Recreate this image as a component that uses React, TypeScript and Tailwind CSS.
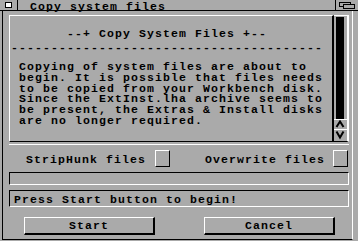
import React from "react";

const lines = [
    "Copying of system files are about to",
    "begin. It is possible that files needs",
    "to be copied from your Workbench disk.",
    "Since the ExtInst.lha archive seems to",
    "be present, the Extras & Install disks",
    "are no longer required.",
];

const font = "font-['Liberation_Mono',monospace] font-bold text-[11.5px] tracking-[1.1px] text-black";

const Checkbox = () => (
    <div className="w-[15px] h-[17px] border-t border-l border-white border-b border-r border-b-black border-r-black" />
);

const Button: React.FC<{ label: string; className?: string }> = ({ label, className }) => (
    <div
        className={`w-[131px] h-[18px] border-t border-l border-white border-b-2 border-r-2 border-b-black border-r-black pt-[1px] text-center leading-[14px] whitespace-pre ${className ?? ""}`}
    >
        {label}
    </div>
);

export default function App() {
    return (
        <div className={`w-[358px] h-[241px] bg-[#aaaaaa] overflow-hidden ${font}`}>
            {/* title bar */}
            <div className="flex h-[11px] border-b border-black">
                <div className="w-[18px] border-r border-black flex items-center justify-center">
                    <div className="w-[7px] h-[6px] border border-black bg-white" />
                </div>
                <div className="flex-1 ml-[12px] leading-[9px] pt-[2px] whitespace-pre">Copy system files</div>
                <div className="w-[23px] border-l border-black">
                    <svg width="22" height="10" viewBox="0 0 22 10">
                        <rect x="3.5" y="2.5" width="11" height="4" fill="#aaaaaa" stroke="black" />
                        <rect x="7.5" y="4.5" width="11" height="4" fill="#aaaaaa" stroke="black" />
                    </svg>
                </div>
            </div>

            {/* window body */}
            <div className="w-[351px] h-[229px] ml-[2px] border-l border-black border-r border-r-white border-b border-b-black">
                <div className="flex flex-col pl-[6px] pt-[4px]">
                    {/* listview */}
                    <div className="flex w-[340px] pb-[2px] border-b border-white">
                        <div className="w-[325px] h-[127px] border-t border-l border-white border-b border-r-2 border-b-black border-r-black pl-[9px] pt-[12px] overflow-hidden">
                            <div className="leading-[11px] whitespace-pre">      --+ Copy System Files +--</div>
                            <div className="leading-[11px] whitespace-pre mt-[3px] ml-[-8px]">{"-".repeat(39)}</div>
                            <div className="leading-[10.8px] whitespace-pre mt-[9px]">
                                {lines.map((l) => (
                                    <div key={l}>{l}</div>
                                ))}
                            </div>
                        </div>
                        <div className="w-[15px] h-[127px] flex flex-col border-t border-white border-r-2 border-b border-b-black">
                            <div className="ml-[2px] mt-[1px] w-[8px] h-[102px] bg-black" />
                            <div className="h-[10px] border-t border-white">
                                <svg width="13" height="9" viewBox="0 0 13 9">
                                    <polyline points="2.5,7 6,1.5 9.5,7" fill="none" stroke="black" strokeWidth="2" />
                                </svg>
                            </div>
                            <div className="flex-1 border-t border-white">
                                <svg width="13" height="10" viewBox="0 0 13 10">
                                    <polyline points="2.5,1.5 6,7.5 9.5,1.5" fill="none" stroke="black" strokeWidth="2" />
                                </svg>
                            </div>
                        </div>
                    </div>

                    {/* options */}
                    <div className="flex items-start h-[17px] mt-[5px]">
                        <div className="ml-[17px] w-[120px] pt-[1px] leading-[17px] whitespace-pre">StripHunk files</div>
                        <div className="ml-[9px]">
                            <Checkbox />
                        </div>
                        <div className="ml-[35px] w-[120px] pt-[1px] leading-[17px] whitespace-pre">Overwrite files</div>
                        <div className="ml-[8px]">
                            <Checkbox />
                        </div>
                    </div>

                    {/* progress */}
                    <div className="w-[340px] h-[13px] mt-[5px] border-t border-l border-black border-b border-r border-b-white border-r-white" />

                    {/* status */}
                    <div className="w-[340px] h-[17px] mt-[5px] border-t border-l border-black border-b border-r border-b-white border-r-white pl-[4px] pt-[1px] leading-[15px] whitespace-pre">
                        Press Start button to begin!
                    </div>

                    {/* buttons */}
                    <div className="flex mt-[10px]">
                        <Button label="Start" className="ml-[15px]" />
                        <Button label="Cancel" className="ml-[49px]" />
                    </div>
                </div>
            </div>
        </div>
    );
}
